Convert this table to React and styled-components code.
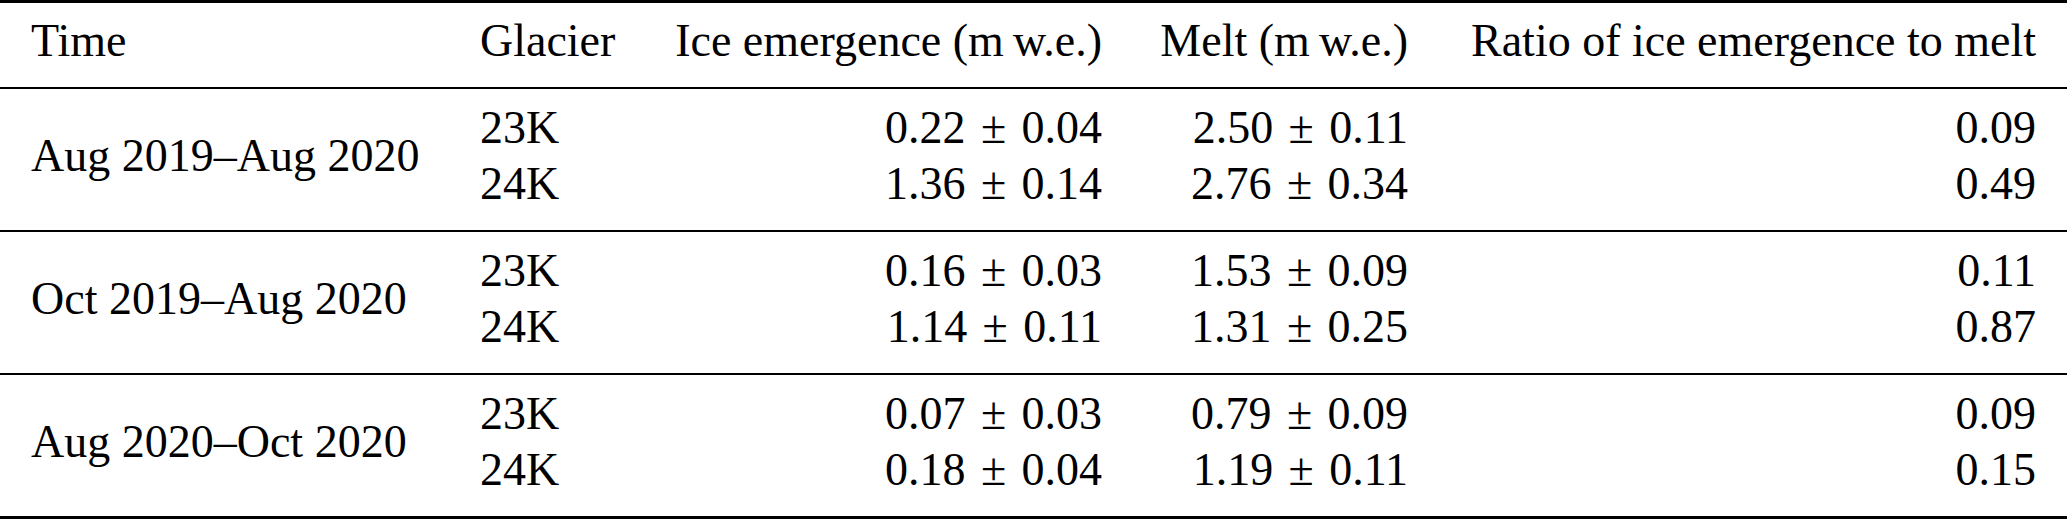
import React from "react";
import styled, { createGlobalStyle } from "styled-components";

const GlobalStyle = createGlobalStyle`
  html, body {
    margin: 0;
    padding: 0;
    background: #ffffff;
  }
  body {
    font-family: "Liberation Serif", "Times New Roman", serif;
    color: #000000;
  }
`;

const columns = [
  { key: "time", label: "Time", align: "left" },
  { key: "glacier", label: "Glacier", align: "left" },
  { key: "ice", label: "Ice emergence (m\u2009w.e.)", align: "right" },
  { key: "melt", label: "Melt (m\u2009w.e.)", align: "right" },
  { key: "ratio", label: "Ratio of ice emergence to melt", align: "right" },
];

// value ± uncertainty, with the wider spacing of a math binary operator
const pm = (value, err) => `${value}\u2004±\u2004${err}`;

const periods = [
  {
    time: "Aug 2019–Aug 2020",
    rows: [
      { glacier: "23K", ice: pm("0.22", "0.04"), melt: pm("2.50", "0.11"), ratio: "0.09" },
      { glacier: "24K", ice: pm("1.36", "0.14"), melt: pm("2.76", "0.34"), ratio: "0.49" },
    ],
  },
  {
    time: "Oct 2019–Aug 2020",
    rows: [
      { glacier: "23K", ice: pm("0.16", "0.03"), melt: pm("1.53", "0.09"), ratio: "0.11" },
      { glacier: "24K", ice: pm("1.14", "0.11"), melt: pm("1.31", "0.25"), ratio: "0.87" },
    ],
  },
  {
    time: "Aug 2020–Oct 2020",
    rows: [
      { glacier: "23K", ice: pm("0.07", "0.03"), melt: pm("0.79", "0.09"), ratio: "0.09" },
      { glacier: "24K", ice: pm("0.18", "0.04"), melt: pm("1.19", "0.11"), ratio: "0.15" },
    ],
  },
];

const App = () => (
  <>
    <GlobalStyle />
    <Sheet>
      <HeaderRow>
        {columns.map((col) => (
          <Cell key={col.key} $align={col.align}>
            {col.label}
          </Cell>
        ))}
      </HeaderRow>
      {periods.map((period, i) => (
        <Group key={period.time} $last={i === periods.length - 1}>
          <TimeCell $span={period.rows.length}>{period.time}</TimeCell>
          {period.rows.map((row) => (
            <React.Fragment key={row.glacier}>
              <Cell $align="left">{row.glacier}</Cell>
              <Cell $align="right">{row.ice}</Cell>
              <Cell $align="right">{row.melt}</Cell>
              <Cell $align="right">{row.ratio}</Cell>
            </React.Fragment>
          ))}
        </Group>
      ))}
    </Sheet>
  </>
);

// Styled Components
const gridColumns = "449px 170px 452px 306px 1fr";

const Sheet = styled.div`
  width: 2067px;
  border-top: 3px solid #000;
  font-family: "Liberation Serif", "Times New Roman", serif;
  font-size: 46px;
  line-height: 56px;
  color: #000;
`;

const HeaderRow = styled.div`
  display: grid;
  grid-template-columns: ${gridColumns};
  padding: 10px 31px 18px;
  border-bottom: 2px solid #000;
`;

const Group = styled.div`
  display: grid;
  grid-template-columns: ${gridColumns};
  grid-auto-rows: 56px;
  padding: 11px 31px 18px;
  border-bottom: ${({ $last }) => ($last ? "3px" : "2px")} solid #000;
`;

const Cell = styled.div`
  text-align: ${({ $align }) => $align};
  white-space: nowrap;
`;

const TimeCell = styled(Cell)`
  grid-column: 1;
  grid-row: span ${({ $span }) => $span};
  align-self: center;
`;

export default App;
